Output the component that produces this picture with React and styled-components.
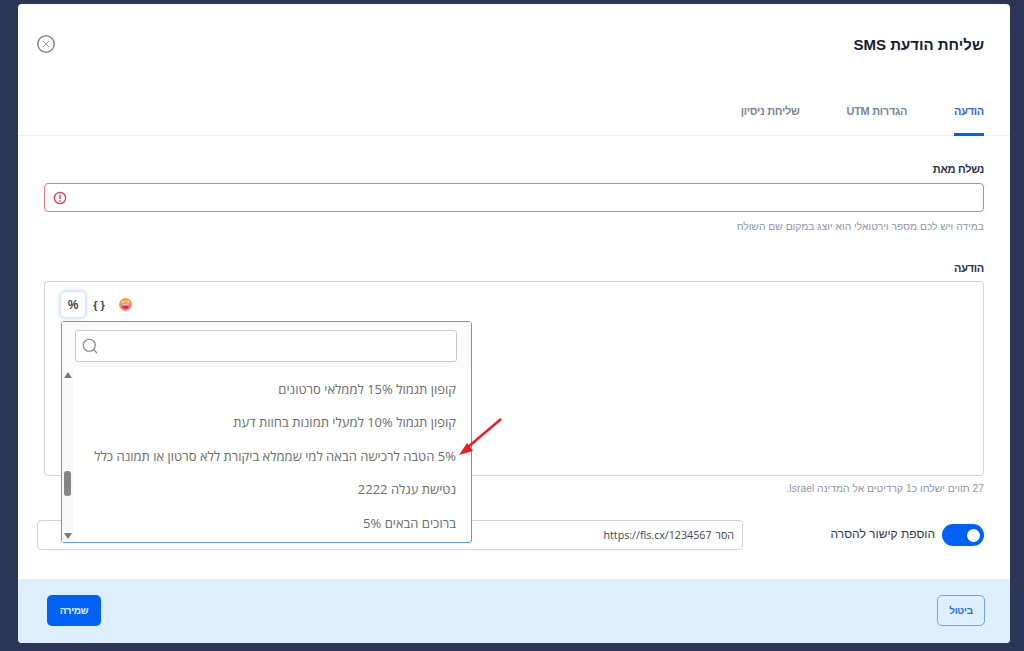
import React from "react";
import styled, { createGlobalStyle } from "styled-components";
import { Search } from "lucide-react";

const GlobalStyle = createGlobalStyle`
  html, body {
    margin: 0;
    height: 651px;
    overflow: hidden;
    background: #2c3555;
  }
  * {
    box-sizing: border-box;
  }
`;

const Modal = styled.div`
  margin: 4px 14px 0 18px;
  width: 992px;
  height: 639px;
  background: #fff;
  border-radius: 4px;
  display: flex;
  flex-direction: column;
  overflow: hidden;
  direction: rtl;
  font-family: "Liberation Sans", "DejaVu Sans", sans-serif;
`;

const Header = styled.div`
  height: 132px;
  padding: 0 26px;
  border-bottom: 1px solid #eef3f9;
  display: flex;
  flex-direction: column;
`;

const TitleRow = styled.div`
  height: 80px;
  display: flex;
  align-items: center;
  justify-content: space-between;
`;

const Title = styled.h1`
  margin: 0;
  font-size: 15px;
  font-weight: 700;
  color: #141b38;
`;

const CloseButton = styled.button`
  width: 20px;
  height: 20px;
  padding: 0;
  margin-left: -8px;
  border: 0;
  background: none;
  display: flex;
`;

const Tabs = styled.div`
  display: flex;
  gap: 47px;
  margin-top: auto;
`;

const Tab = styled.div`
  height: 51px;
  padding-top: 18px;
  font-size: 11px;
  font-weight: 700;
  letter-spacing: -0.3px;
  line-height: 16px;
  color: ${(p) => (p.$active ? "#3a62d8" : "#7d8494")};
  border-bottom: 3px solid ${(p) => (p.$active ? "#0061f5" : "transparent")};
  margin-bottom: -1px;
`;

const Body = styled.div`
  flex: 1;
  padding: 26px 26px 0;
`;

const Label = styled.div`
  font-size: 11px;
  font-weight: 700;
  letter-spacing: -0.3px;
  line-height: 14px;
  color: #2a3045;
  margin-bottom: ${(p) => p.$gap}px;
`;

const ErrorInput = styled.div`
  height: 29px;
  border: 1px solid #f0727f;
  border-radius: 4px;
  display: flex;
  align-items: center;
  justify-content: flex-end;
  padding-left: 8px;
`;

const Hint = styled.div`
  font-size: 10.3px;
  line-height: 16px;
  color: #8e939f;
  margin-top: ${(p) => p.$top}px;
`;

const MessageBlock = styled.div`
  margin-top: 26px;
`;

const MessageBox = styled.div`
  position: relative;
  height: 195px;
  border: 1px solid #cfd2da;
  border-radius: 4px;
`;

const Toolbar = styled.div`
  direction: ltr;
  display: flex;
  align-items: center;
  padding: 10px 0 0 16px;
`;

const PercentButton = styled.div`
  width: 24px;
  height: 25px;
  border-radius: 4px;
  background: #fff;
  box-shadow: 0 0 4px 1px #b9ccfb;
  font-size: 12px;
  font-weight: 700;
  color: #3b4152;
  display: flex;
  align-items: center;
  justify-content: center;
`;

const Braces = styled.div`
  margin-left: 7px;
  width: 14px;
  font-size: 11px;
  font-weight: 700;
  color: #3b4152;
  text-align: center;
  white-space: nowrap;
`;

const EmojiIcon = styled.svg`
  margin-left: 13px;
  width: 13px;
  height: 13px;
`;

const Dropdown = styled.div`
  position: absolute;
  left: 16px;
  top: 39px;
  width: 411px;
  height: 222px;
  background: #fff;
  border: 1px solid #5c94f5;
  border-radius: 3px;
  display: flex;
  flex-direction: column;
  z-index: 2;
`;

const SearchRow = styled.div`
  height: 46px;
  flex: none;
  padding: 8px 14px 0 13px;
  background: #fbfbfc;
`;

const SearchBox = styled.div`
  direction: ltr;
  height: 32px;
  background: #fff;
  border: 1px solid #c6c8cf;
  border-radius: 3px;
  display: flex;
  align-items: center;
  padding-left: 5px;
  color: #7f8794;
`;

const ListArea = styled.div`
  flex: 1;
  display: flex;
  min-height: 0;
`;

const Options = styled.div`
  flex: 1;
  padding: 4px 15px 0 0;
`;

const Option = styled.div`
  height: 33.5px;
  display: flex;
  align-items: center;
  font-family: "Open Sans", "DejaVu Sans", sans-serif;
  font-size: 13px;
  color: #6b6b6b;
  white-space: nowrap;
`;

const ScrollTrack = styled.div`
  width: 11px;
  flex: none;
  background: #f8f8f8;
  display: flex;
  flex-direction: column;
  align-items: center;
  padding: 4px 0 3px;
`;

const ScrollArrow = styled.div`
  width: 0;
  height: 0;
  border-left: 4px solid transparent;
  border-right: 4px solid transparent;
  border-bottom: ${(p) => (p.$down ? "0" : "6px solid #777")};
  border-top: ${(p) => (p.$down ? "6px solid #777" : "0")};
  margin-top: ${(p) => (p.$down ? "auto" : "0")};
`;

const ScrollThumb = styled.div`
  width: 7px;
  height: 25px;
  margin-top: 93px;
  border-radius: 3px;
  background: #858585;
`;

const ArrowMark = styled.svg`
  position: absolute;
  left: 405px;
  top: 133px;
  width: 55px;
  height: 45px;
  z-index: 3;
`;

const UnsubRow = styled.div`
  margin-top: 23px;
  display: flex;
  align-items: center;
  justify-content: space-between;
`;

const ToggleWrap = styled.div`
  display: flex;
  align-items: center;
  gap: 7px;
`;

const Toggle = styled.div`
  width: 42px;
  height: 22px;
  border-radius: 11px;
  background: #0061f5;
  display: flex;
  align-items: center;
  padding: 0 4px;
`;

const Knob = styled.div`
  width: 13px;
  height: 13px;
  border-radius: 50%;
  background: #fff;
`;

const ToggleLabel = styled.div`
  font-size: 12px;
  color: #2d3347;
  margin-top: -3px;
`;

const UrlField = styled.div`
  width: 706px;
  height: 30px;
  margin-left: -7px;
  border: 1px solid #cfd2da;
  border-radius: 4px;
  display: flex;
  align-items: center;
  gap: 4px;
  padding-right: 8px;
  font-family: "Open Sans", "DejaVu Sans", sans-serif;
  font-size: 10.7px;
  color: #3d4354;
`;

const Footer = styled.div`
  height: 64px;
  flex: none;
  background: #deefff;
  padding: 16px 25px 0 29px;
  display: flex;
  justify-content: space-between;
`;

const CancelButton = styled.button`
  width: 48px;
  height: 31px;
  background: transparent;
  border: 1px solid #6ea4f2;
  border-radius: 5px;
  font-family: inherit;
  font-size: 10px;
  font-weight: 700;
  letter-spacing: -0.3px;
  color: #2f6fe0;
`;

const SaveButton = styled.button`
  width: 54px;
  height: 31px;
  background: #0061f5;
  border: 0;
  border-radius: 5px;
  font-family: inherit;
  font-size: 10px;
  font-weight: 700;
  letter-spacing: -0.4px;
  color: #e8f0ff;
`;

const options = [
  "קופון תגמול 15% לממלאי סרטונים",
  "קופון תגמול 10% למעלי תמונות בחוות דעת",
  "5% הטבה לרכישה הבאה למי שממלא ביקורת ללא סרטון או תמונה כלל",
  "נטישת עגלה 2222",
  "ברוכים הבאים 5%",
];

const App = () => {
  return (
    <>
      <GlobalStyle />
      <Modal>
        <Header>
          <TitleRow>
            <Title>שליחת הודעת SMS</Title>
            <CloseButton aria-label="close">
              <svg width="20" height="20" viewBox="0 0 20 20" fill="none">
                <circle cx="10" cy="10" r="8.2" stroke="#868686" strokeWidth="1.5" />
                <path d="M7 7l6 6M13 7l-6 6" stroke="#9a9a9a" strokeWidth="1" />
              </svg>
            </CloseButton>
          </TitleRow>
          <Tabs>
            <Tab $active>הודעה</Tab>
            <Tab>הגדרות UTM</Tab>
            <Tab>שליחת ניסיון</Tab>
          </Tabs>
        </Header>
        <Body>
          <Label $gap={7}>נשלח מאת</Label>
          <ErrorInput>
            <svg width="14" height="14" viewBox="0 0 14 14" fill="none">
              <circle cx="7" cy="7" r="5.6" stroke="#e2354a" strokeWidth="1.3" />
              <path d="M7 3.8v4" stroke="#e2354a" strokeWidth="1.4" />
              <circle cx="7" cy="9.9" r="0.8" fill="#e2354a" />
            </svg>
          </ErrorInput>
          <Hint $top={7}>במידה ויש לכם מספר וירטואלי הוא יוצג במקום שם השולח</Hint>
          <MessageBlock>
            <Label $gap={6}>הודעה</Label>
            <MessageBox>
              <Toolbar>
                <PercentButton>%</PercentButton>
                <Braces>{"{ }"}</Braces>
                <EmojiIcon viewBox="0 0 13 13">
                  <circle cx="6.5" cy="6.5" r="6.5" fill="#f2a23c" />
                  <circle cx="4.2" cy="4" r="1.3" fill="#fff" />
                  <circle cx="8.8" cy="4" r="1.3" fill="#fff" />
                  <circle cx="4.2" cy="4" r="0.6" fill="#4a2a10" />
                  <circle cx="8.8" cy="4" r="0.6" fill="#4a2a10" />
                  <path d="M2.4 6.4h8.2c0 2.6-1.8 4.6-4.1 4.6S2.4 9 2.4 6.4z" fill="#d6218c" />
                  <path d="M3 6.4h7v1H3z" fill="#fff" />
                </EmojiIcon>
              </Toolbar>
              <Dropdown>
                <SearchRow>
                  <SearchBox>
                    <Search size={18} strokeWidth={1.6} />
                  </SearchBox>
                </SearchRow>
                <ListArea>
                  <Options>
                    {options.map((text) => (
                      <Option key={text}>{text}</Option>
                    ))}
                  </Options>
                  <ScrollTrack>
                    <ScrollArrow />
                    <ScrollThumb />
                    <ScrollArrow $down />
                  </ScrollTrack>
                </ListArea>
              </Dropdown>
              <ArrowMark viewBox="0 0 55 45">
                <path d="M51 4L18 32" stroke="#ee1c1c" strokeWidth="2.4" fill="none" />
                <polygon points="9,40 17,28 23,36" fill="#ee1c1c" />
              </ArrowMark>
            </MessageBox>
          </MessageBlock>
          <Hint $top={5}>27 תווים ישלחו כ1 קרדיטים אל המדינה Israel.</Hint>
          <UnsubRow>
            <ToggleWrap>
              <Toggle>
                <Knob />
              </Toggle>
              <ToggleLabel>הוספת קישור להסרה</ToggleLabel>
            </ToggleWrap>
            <UrlField>
              <span>הסר</span>
              <span dir="ltr">https://fls.cx/1234567</span>
            </UrlField>
          </UnsubRow>
        </Body>
        <Footer>
          <CancelButton>ביטול</CancelButton>
          <SaveButton>שמירה</SaveButton>
        </Footer>
      </Modal>
    </>
  );
};

export default App;
